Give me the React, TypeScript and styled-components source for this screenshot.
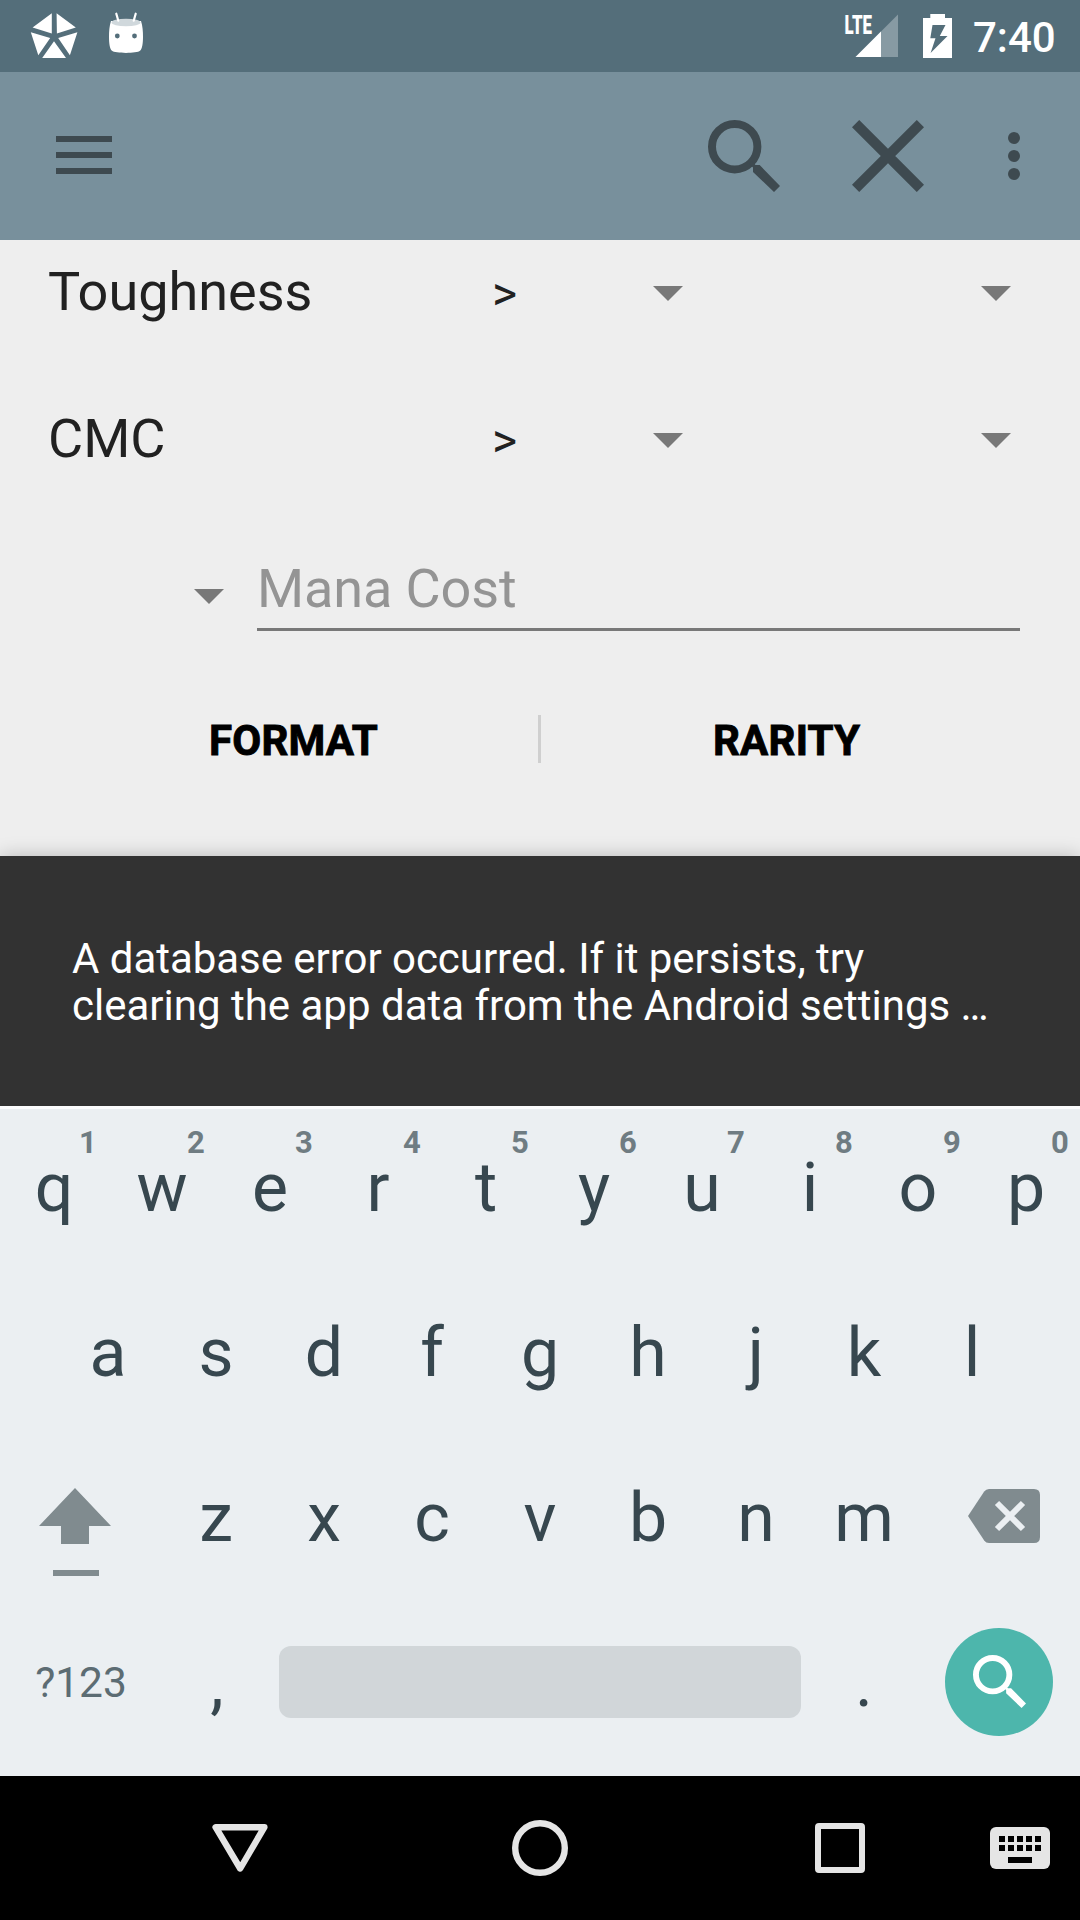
import React from "react";
import styled, { createGlobalStyle } from "styled-components";

const GlobalStyle = createGlobalStyle`
  html, body { margin: 0; padding: 0; background: #000; }
  *, *::before, *::after { box-sizing: border-box; }
  button { border: 0; padding: 0; background: none; font: inherit; color: inherit; }
  svg { display: block; flex: none; }
`;

const Screen = styled.div`
  width: 1080px;
  height: 1920px;
  display: flex;
  flex-direction: column;
  overflow: hidden;
  font-family: Roboto, "Noto Sans", sans-serif;
  background: #eeeeee;
`;

/* Status bar */
const StatusBar = styled.header`
  height: 72px;
  flex: none;
  display: flex;
  align-items: center;
  justify-content: space-between;
  padding: 0 23px 0 30px;
  background: #546e7a;
  color: #fff;
`;
const StatusGroup = styled.div<{ $gap: number }>`
  display: flex;
  align-items: center;
  gap: ${(p) => p.$gap}px;
`;
const Clock = styled.span`
  font-size: 42px;
  font-weight: 500;
  line-height: 72px;
  width: 84px;
  padding-top: 3px;
  margin-left: 20px;
  white-space: nowrap;
`;

/* Toolbar */
const Toolbar = styled.nav`
  height: 168px;
  flex: none;
  display: flex;
  align-items: center;
  padding: 0 12px 0 48px;
  background: #78909c;
  color: #3e4a50;
`;
const ToolbarSpacer = styled.div`
  flex: 1;
`;
const ToolButton = styled.button<{ $width: number }>`
  width: ${(p) => p.$width}px;
  height: 144px;
  display: flex;
  align-items: center;
  justify-content: center;
`;
const MenuButton = styled(ToolButton)`
  padding-bottom: 2px;
`;

/* Search form */
const Form = styled.main`
  height: 616px;
  flex: none;
  overflow: hidden;
  background: #eeeeee;
  color: #212121;
`;
const FormScroll = styled.div`
  display: flex;
  flex-direction: column;
  margin-top: -22px;
`;
const StatRow = styled.div`
  height: 147px;
  display: grid;
  grid-template-columns: 444px 191px 328px;
  align-items: center;
  padding-left: 48px;
`;
const StatLabel = styled.span`
  font-size: 54px;
  line-height: 64px;
`;
const Spinner = styled.div`
  display: flex;
  align-items: center;
  height: 72px;
  padding-top: 4px;
  font-size: 48px;
  line-height: 56px;
`;
const SpinnerValue = styled.span`
  padding-top: 1px;
`;
const SpinnerArrow = styled.i`
  width: 30px;
  height: 15px;
  margin-left: auto;
  background: #787878;
  clip-path: polygon(0 0, 100% 0, 50% 100%);
`;
const ManaRow = styled.div`
  height: 119px;
  display: flex;
  align-items: flex-end;
  padding: 0 60px 0 194px;
`;
const ManaSpinner = styled.div`
  width: 30px;
  height: 42px;
  margin-right: 33px;
`;
const ManaField = styled.div`
  flex: 1;
  height: 74px;
  border-bottom: 3px solid #787878;
  color: #949494;
  font-size: 54px;
  line-height: 64px;
  letter-spacing: -0.12px;
`;
const FilterRow = styled.div`
  height: 144px;
  margin-top: 36px;
  display: grid;
  grid-template-columns: 538px 3px 1fr;
  align-items: center;
`;
const FilterButton = styled.button<{ $inset: number }>`
  height: 144px;
  padding: 3px 0 0 ${(p) => p.$inset}px;
  text-align: left;
  font-size: 42px;
  line-height: 48px;
  font-weight: 700;
  letter-spacing: 0.2px;
  -webkit-text-stroke: 0.9px #000;
  color: #000;
`;
const FilterDivider = styled.div`
  height: 48px;
  background: #cfcfcf;
`;

/* Snackbar */
const Snackbar = styled.section`
  position: relative;
  height: 250px;
  flex: none;
  display: flex;
  flex-direction: column;
  justify-content: center;
  padding: 2px 72px 0;
  background: #323232;
  color: #fff;
  box-shadow: 0 0 18px rgba(0, 0, 0, 0.22);
`;
const SnackbarLine = styled.span<{ $tracking?: number }>`
  font-size: 42px;
  line-height: 47px;
  letter-spacing: ${(p) => p.$tracking ?? 0}px;
  white-space: nowrap;
`;

/* Keyboard */
const Keyboard = styled.section`
  position: relative;
  height: 670px;
  flex: none;
  display: flex;
  flex-direction: column;
  padding-top: 2px;
  border-top: 3px solid #fbfcfd;
  background: #ebeff2;
  color: #37474f;
`;
const KeyRow = styled.div<{ $columns: string; $inset?: number }>`
  height: 165px;
  display: grid;
  grid-template-columns: ${(p) => p.$columns};
  padding: 0 ${(p) => p.$inset ?? 0}px;
`;
const Key = styled.button<{ $nudge?: number }>`
  position: relative;
  height: 165px;
  display: flex;
  justify-content: center;
  font-size: 68px;
  line-height: 80px;
  padding: 37px 0 0 ${(p) => p.$nudge ?? 0}px;
`;
const KeyHint = styled.span`
  position: absolute;
  top: 14px;
  left: 55px;
  width: 66px;
  text-align: center;
  font-size: 31px;
  line-height: 36px;
  font-weight: 700;
  color: #6f7c82;
`;
const SymbolsKey = styled(Key)`
  font-size: 42.5px;
  line-height: 50px;
  padding: 52px 0 0 0;
  color: #5c6c73;
`;
const IconKey = styled.button<{ $top: number; $left: number }>`
  height: 165px;
  padding: ${(p) => p.$top}px 0 0 ${(p) => p.$left}px;
  display: flex;
  align-items: flex-start;
`;
const SpaceBar = styled.button`
  height: 72px;
  margin: 40px 9px 0;
  border-radius: 12px;
  background: #d1d6d9;
`;
const EnterKey = styled.button`
  width: 108px;
  height: 108px;
  margin: 22px 0 0 27px;
  padding-bottom: 2px;
  border-radius: 50%;
  background: #4db6ac;
  display: flex;
  align-items: center;
  justify-content: center;
`;

/* Navigation bar */
const NavBar = styled.footer`
  height: 144px;
  flex: none;
  display: grid;
  grid-template-columns: 90px 300px 300px 300px 90px;
  background: #000;
`;
const NavButton = styled.button<{ $column: number }>`
  grid-column: ${(p) => p.$column};
  display: flex;
  align-items: center;
  justify-content: ${(p) => (p.$column === 5 ? "flex-start" : "center")};
`;

const PentagonIcon = () => (
  <svg width="48" height="48" viewBox="30 12 48 48" fill="#fff">
    <path d="M51.8 13.2 32.6 27.4 51.8 33.4zM56.6 13.2 75.8 27.4 56.9 33.4zM30.8 32.2 50.2 38 38.3 55.2zM77.4 32.2 58.2 38 69.9 55.2zM54 41.3 42.2 58H66z" />
  </svg>
);

const DroidIcon = () => (
  <svg width="36" height="48" viewBox="108 12 36 48">
    <path d="M111 21C109.400 26 109 31 109 37C109 43 109.700 49 112 50.800C115 53.600 137 53.600 140 50.800C142.300 49 143 43 143 37C143 31 142.600 26 141 21z" fill="#fff" />
    <ellipse cx="126" cy="22.500" rx="14.500" ry="3.800" fill="#d0d8dc" />
    <path d="M116.300 13.700 118.300 20.700M135.700 13.700 133.700 20.700" stroke="#fff" strokeWidth="2.200" strokeLinecap="round" />
    <circle cx="117.300" cy="36" r="2.400" fill="#546e7a" />
    <circle cx="134.500" cy="36" r="2.400" fill="#546e7a" />
  </svg>
);

const SignalIcon = () => (
  <svg width="60" height="64" viewBox="840 4 60 64">
    <path d="M898 14.500V57H855.500z" fill="#879aa3" />
    <path d="M881 31.500V57H855.500z" fill="#fff" />
    <text x="844.500" y="33.500" textLength="27.500" lengthAdjust="spacingAndGlyphs" fontFamily="Roboto, sans-serif" fontSize="26" fontWeight="900" fill="#fff">LTE</text>
  </svg>
);

const BatteryIcon = () => (
  <svg width="30" height="48" viewBox="923 12 30 48">
    <path fill="#fff" fillRule="evenodd" d="M930.300 14H945V18H952V58H923V18H930.300zM932.500 25 930.300 38.300H935.500L930.600 53 947.500 36H939.800L945.500 25z" />
  </svg>
);

const MenuIcon = () => (
  <svg width="56" height="38" viewBox="0 0 56 38" fill="currentColor">
    <path d="M0 0h56v6H0zM0 16h56v6H0zM0 32h56v6H0z" />
  </svg>
);

const SearchIcon = ({ size, color }: { size: number; color: string }) => (
  <svg width={size} height={size} viewBox="0 0 72 72">
    <circle cx="26.700" cy="26.700" r="22.700" fill="none" stroke={color} strokeWidth="8" />
    <path fill={color} d="M45 47.500V52L66 72 72 66 51.700 45H47.500L43.500 41 41 43.500z" />
  </svg>
);

const CloseIcon = () => (
  <svg width="72" height="72" viewBox="0 0 72 72">
    <path d="M3.600 3.600 68.400 68.400M68.400 3.600 3.600 68.400" stroke="currentColor" strokeWidth="10.200" />
  </svg>
);

const MoreIcon = () => (
  <svg width="12" height="48" viewBox="0 0 12 48" fill="currentColor">
    <circle cx="6" cy="6" r="6" />
    <circle cx="6" cy="24" r="6" />
    <circle cx="6" cy="42" r="6" />
  </svg>
);

const ShiftIcon = () => (
  <svg width="72" height="88" viewBox="39 1488 72 88" fill="#808b8f">
    <path d="M75 1488 111 1526H89V1544H61V1526H39zM53 1570h46v6H53z" />
  </svg>
);

const BackspaceIcon = () => (
  <svg width="72" height="54" viewBox="0 0 72 54">
    <path d="M0 27 16.200 2.500Q18 0 21 0H66Q72 0 72 6V48Q72 54 66 54H21Q18 54 16.200 51.500z" fill="#808b8f" />
    <path d="M29 14 55 40M55 14 29 40" stroke="#ebeff2" strokeWidth="6" />
  </svg>
);

const BackIcon = () => (
  <svg width="56" height="48" viewBox="0 0 56 48">
    <path d="M3.600 3.200H52.400L28.200 44.500z" fill="none" stroke="#e5e5e5" strokeWidth="6.400" strokeLinejoin="round" />
  </svg>
);

const HomeIcon = () => (
  <svg width="56" height="56" viewBox="0 0 56 56">
    <circle cx="28" cy="28" r="24.800" fill="none" stroke="#e5e5e5" strokeWidth="6.400" />
  </svg>
);

const RecentsIcon = () => (
  <svg width="50" height="50" viewBox="0 0 50 50">
    <path fill="#e5e5e5" fillRule="evenodd" d="M4 0H46Q50 0 50 4V46Q50 50 46 50H4Q0 50 0 46V4Q0 0 4 0zM6 6V44H44V6z" />
  </svg>
);

const KeyboardIcon = () => (
  <svg width="60" height="42" viewBox="0 0 60 42">
    <rect width="60" height="42" rx="6" fill="#e5e5e5" />
    {[9, 18, 27, 36, 45].map((x) => (
      <path key={x} d={`M${x} 9h6v6h-6zM${x} 18h6v6h-6z`} fill="#000" />
    ))}
    <path d="M18 30h24v6H18z" fill="#000" />
  </svg>
);

const topKeys = ["q", "w", "e", "r", "t", "y", "u", "i", "o", "p"];

export default function App() {
  return (
    <>
      <GlobalStyle />
      <Screen>
        <StatusBar>
          <StatusGroup $gap={30}>
            <PentagonIcon />
            <DroidIcon />
          </StatusGroup>
          <StatusGroup $gap={0}>
            <StatusGroup $gap={23}>
              <SignalIcon />
              <BatteryIcon />
            </StatusGroup>
            <Clock>7:40</Clock>
          </StatusGroup>
        </StatusBar>

        <Toolbar>
          <MenuButton $width={72} aria-label="Menu"><MenuIcon /></MenuButton>
          <ToolbarSpacer />
          <ToolButton $width={144} aria-label="Search"><SearchIcon size={72} color="#3e4a50" /></ToolButton>
          <ToolButton $width={144} aria-label="Clear"><CloseIcon /></ToolButton>
          <ToolButton $width={108} aria-label="More"><MoreIcon /></ToolButton>
        </Toolbar>

        <Form>
          <FormScroll>
            {["Toughness", "CMC"].map((label) => (
              <StatRow key={label}>
                <StatLabel>{label}</StatLabel>
                <Spinner>
                  <SpinnerValue>&gt;</SpinnerValue>
                  <SpinnerArrow />
                </Spinner>
                <Spinner>
                  <SpinnerArrow />
                </Spinner>
              </StatRow>
            ))}
            <ManaRow>
              <ManaSpinner><SpinnerArrow as="div" /></ManaSpinner>
              <ManaField>Mana Cost</ManaField>
            </ManaRow>
            <FilterRow>
              <FilterButton $inset={209}>FORMAT</FilterButton>
              <FilterDivider />
              <FilterButton $inset={172}>RARITY</FilterButton>
            </FilterRow>
          </FormScroll>
        </Form>

        <Snackbar>
          <SnackbarLine $tracking={-0.04}>A database error occurred. If it persists, try</SnackbarLine>
          <SnackbarLine>clearing the app data from the Android settings …</SnackbarLine>
        </Snackbar>

        <Keyboard>
          <KeyRow $columns="repeat(10, 108px)">
            {topKeys.map((k, i) => (
              <Key key={k}>
                {k}
                <KeyHint>{(i + 1) % 10}</KeyHint>
              </Key>
            ))}
          </KeyRow>
          <KeyRow $columns="repeat(9, 108px)" $inset={54}>
            {[..."asdfghjkl"].map((k) => <Key key={k}>{k}</Key>)}
          </KeyRow>
          <KeyRow $columns="162px repeat(7, 108px) 162px">
            <IconKey $top={47} $left={39} aria-label="Shift"><ShiftIcon /></IconKey>
            {[..."zxcvbnm"].map((k) => <Key key={k}>{k}</Key>)}
            <IconKey $top={48} $left={50} aria-label="Delete"><BackspaceIcon /></IconKey>
          </KeyRow>
          <KeyRow $columns="162px 108px 540px 108px 162px">
            <SymbolsKey>?123</SymbolsKey>
            <Key $nudge={2}>,</Key>
            <SpaceBar aria-label="Space" />
            <Key>.</Key>
            <EnterKey aria-label="Search"><SearchIcon size={53} color="#fff" /></EnterKey>
          </KeyRow>
        </Keyboard>

        <NavBar>
          <NavButton $column={2} aria-label="Back"><BackIcon /></NavButton>
          <NavButton $column={3} aria-label="Home"><HomeIcon /></NavButton>
          <NavButton $column={4} aria-label="Recents"><RecentsIcon /></NavButton>
          <NavButton $column={5} aria-label="Switch keyboard"><KeyboardIcon /></NavButton>
        </NavBar>
      </Screen>
    </>
  );
}
